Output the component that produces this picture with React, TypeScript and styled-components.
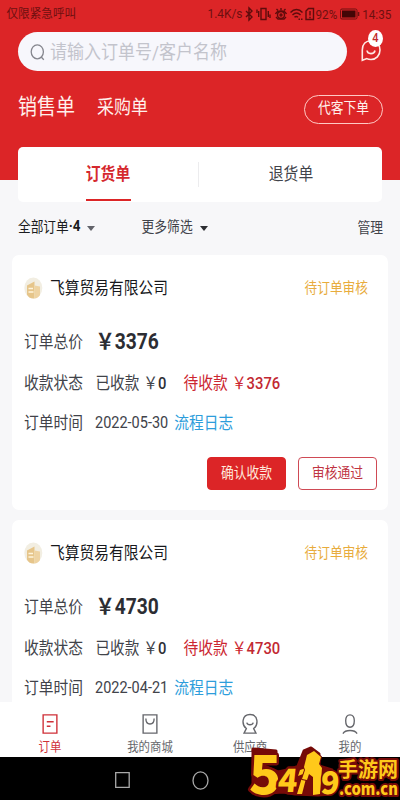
import React from "react";
import styled, { createGlobalStyle } from "styled-components";

const RED = "#dc2527";

const GlobalStyle = createGlobalStyle`
  * { box-sizing: border-box; }
  body { margin: 0; background: #f7f7f9; }
`;

const Screen = styled.div`
  width: 400px;
  height: 800px;
  position: relative;
  overflow: hidden;
  display: flex;
  flex-direction: column;
  background: #f7f7f9;
  font-family: Roboto, "Noto Sans CJK SC", sans-serif;
`;

const Txt = styled.span<{ $size: number; $color?: string; $weight?: number; $stretch?: number }>`
  display: inline-block;
  flex: none;
  white-space: nowrap;
  line-height: 20px;
  font-size: ${(p) => p.$size}px;
  color: ${(p) => p.$color ?? "#41434a"};
  font-weight: ${(p) => p.$weight ?? 400};
  transform: scaleY(${(p) => p.$stretch ?? 1.13});
`;

const Header = styled.header`
  flex: none;
  height: 180px;
  background: ${RED};
  display: flex;
  flex-direction: column;
`;

const StatusBar = styled.div`
  height: 32px;
  padding: 0 8px 4px 6.5px;
  display: flex;
  align-items: center;
  justify-content: space-between;
`;

const StatusIcons = styled.div`
  display: flex;
  align-items: center;
  width: 184px;
  height: 20px;
  margin-right: 0.5px;
  svg { flex: none; }
`;

const SearchRow = styled.div`
  height: 39px;
  padding-left: 18px;
  display: flex;
  align-items: center;
`;

const SearchBox = styled.div`
  width: 329px;
  height: 39px;
  border-radius: 20px;
  background: #f7f7fc;
  display: flex;
  align-items: center;
  padding-left: 12px;
  gap: 4px;
`;

const ChatButton = styled.div`
  position: relative;
  margin-left: 13px;
  margin-top: -3px;
  width: 24px;
  height: 24px;
`;

const Badge = styled.span`
  position: absolute;
  left: 8px;
  top: -8px;
  width: 15px;
  height: 17px;
  border-radius: 50%;
  background: #fff;
  display: flex;
  align-items: center;
  justify-content: center;
`;

const KindRow = styled.div`
  height: 76px;
  padding: 0 17px 5px 18px;
  display: flex;
  align-items: center;
  gap: 22px;
`;

const PillButton = styled.div`
  margin-left: auto;
  margin-top: 6px;
  width: 79px;
  height: 29px;
  border: 1px solid #ffc9c4;
  border-radius: 15px;
  display: flex;
  align-items: center;
  justify-content: center;
  padding-bottom: 3px;
`;

const TabCard = styled.div`
  flex: none;
  margin: -33px 18px 0;
  height: 55px;
  border-radius: 5px;
  background: #fff;
  display: flex;
`;

const Tab = styled.div<{ $active?: boolean }>`
  width: 180px;
  display: flex;
  flex-direction: column;
  align-items: center;
  padding-top: 17px;
  & ~ & { flex: 1; padding-left: 1px; }
  &::after {
    content: "";
    width: 45px;
    height: 2px;
    margin-top: 15px;
    background: ${(p) => (p.$active ? RED : "transparent")};
  }
`;

const TabDivider = styled.div`
  width: 1px;
  height: 25px;
  margin-top: 15px;
  background: #ececee;
`;

const FilterRow = styled.div`
  flex: none;
  height: 53px;
  padding: 0 17px 3px 18px;
  display: flex;
  align-items: center;
`;

const Caret = styled.i<{ $color: string; $gap: number }>`
  margin-left: ${(p) => p.$gap}px;
  margin-top: 2px;
  border: 4.5px solid transparent;
  border-top: 5px solid ${(p) => p.$color};
  border-bottom: 0;
`;

const MoreFilter = styled.div`
  display: flex;
  align-items: center;
  margin-left: 46px;
`;

const Manage = styled.div`
  margin-left: auto;
`;

const OrderCard = styled.section`
  flex: none;
  margin: 0 12px 10px;
  height: 255px;
  border-radius: 7px;
  background: #fff;
  padding: 23px 11px 0 12px;
`;

const CardHead = styled.div`
  display: flex;
  align-items: center;
  height: 20px;
  padding-right: 9px;
  svg { margin-right: 7px; }
  > :last-child { margin-left: auto; margin-top: -1px; }
`;

const Field = styled.div<{ $top: number }>`
  display: flex;
  align-items: center;
  height: 20px;
  margin-top: ${(p) => p.$top}px;
`;

const Value = styled.div<{ $gap: number }>`
  display: flex;
  align-items: center;
  margin-left: ${(p) => p.$gap}px;
`;

const Actions = styled.div`
  display: flex;
  justify-content: flex-end;
  gap: 12px;
  margin-top: 24px;
`;

const ActionButton = styled.div<{ $solid?: boolean }>`
  width: 79px;
  height: 33px;
  border: 1px solid ${(p) => (p.$solid ? RED : "#cf4a55")};
  border-radius: 4px;
  background: ${(p) => (p.$solid ? RED : "#fff")};
  display: flex;
  align-items: center;
  justify-content: center;
  padding-bottom: 1px;
`;

const BottomArea = styled.footer`
  position: absolute;
  left: 0;
  right: 0;
  bottom: 0;
`;

const NavBar = styled.nav`
  height: 55px;
  background: #fff;
  display: flex;
`;

const NavItem = styled.div`
  flex: 1;
  display: flex;
  flex-direction: column;
  align-items: center;
  padding-top: 11px;
  gap: 2px;
`;

const SystemBar = styled.div`
  height: 43px;
  background: #000;
  display: flex;
  align-items: center;
  padding: 3px 0 0 114px;
  gap: 61px;
`;

const Watermark = styled.svg`
  position: absolute;
  right: 0;
  bottom: 0;
`;

const StatusGlyphs = () => (
  <svg width="72" height="16" viewBox="0 0 72 16" fill="none" stroke="#5e0c0c" strokeWidth="1.4">
    <path d="M2 5l6 6-3 3V2l3 3-6 6" />
    <path d="M17 2.500h5v11h-5zM14.700 5v6M24.300 5v6M13 3.500v3.500M26 8.500v3.500" />
    <circle cx="37" cy="9" r="3.500" />
    <circle cx="37" cy="9" r="1" />
    <path d="M31.500 8c2-4 9-4 11 0M32.500 3l1.500 1.500M41.500 3L40 4.500M37 2v2M32 11l2 2h6l2-2" />
    <path d="M46.500 6.500c3.500-4 8.500-4 12 0M48.500 9c2.500-2.500 5.500-2.500 8 0M50.500 11.300c1-1 2.500-1 3.500 0" />
    <path d="M54.500 13.200h5" strokeDasharray="1.500 1" />
    <path d="M62 5l2.500-2.500h5v11H62zM66 5v4.500M66 10.800v1.400" />
  </svg>
);

const BatteryIcon = () => (
  <svg width="20" height="12" viewBox="0 0 20 12">
    <rect x="0.500" y="1" width="16.500" height="10" rx="1.500" fill="none" stroke="#6e1010" />
    <rect x="2" y="2.500" width="13.500" height="7" fill="#430606" />
    <rect x="17.800" y="4" width="1.500" height="4" fill="#6e1010" />
  </svg>
);

const SearchIcon = () => (
  <svg width="16" height="20" viewBox="0 0 16 20" fill="none" stroke="#85868e" strokeWidth="1.300">
    <ellipse cx="7.300" cy="9.800" rx="6.100" ry="7" />
    <path d="M11.200 15l2.600 2.700" />
  </svg>
);

const ChatIcon = () => (
  <svg width="24" height="24" viewBox="0 0 24 24" fill="none" stroke="#ffe9e4" strokeWidth="1.600">
    <path d="M2.300 22.300V12C2.300 6 6 2.700 11 2.700c5.500 0 9 4 9 9.400 0 5.500-4 9.400-9 9.400-1.800 0-3-.2-4.200-.9z" />
    <path d="M7 12.500c.6 4.200 7.200 4.200 8 0" />
  </svg>
);

const CompanyIcon = () => (
  <svg width="19" height="22" viewBox="0 0 19 22">
    <ellipse cx="9.300" cy="11" rx="9" ry="10.600" fill="#f2eee2" />
    <path d="M3 8.500l7.500-4v17c-4 .3-6.500-1.500-7.500-4z" fill="#e6c58a" />
    <path d="M10.500 8.500l5.500 1v8.500c-1.500 2.500-3 3.300-5.500 3.500z" fill="#eed3a2" />
    <path d="M4.500 11.500h4.500M4.500 15h5" stroke="#fff5dd" strokeWidth="1.500" />
  </svg>
);

const navIcons = [
  <path key="o" d="M3.500 2h15v20h-15zM7.500 9.500h7.500M7.500 14.500h4" />,
  <path key="m" d="M3.500 2h15v20h-15zM6.500 6c0 8 9 8 9 0" />,
  <path key="s" d="M7 17C1.500 12.500 2 1.700 11 1.700s9.500 10.800 4 15.300l2.500 5h-13zM7.500 10.500c.8 3 6.200 3 7 0" />,
  <path key="p" d="M11 2c3.200 0 4.700 2.200 4.700 6.500s-1.700 7-4.700 7-4.700-2.700-4.700-7S7.800 2 11 2zM3.300 22.500c2.500-4.500 12.900-4.500 15.400 0" />,
];

const navLabels = ["订单", "我的商城", "供应商", "我的"];

const orders = [
  { total: "3376", date: "2022-05-30" },
  { total: "4730", date: "2022-04-21" },
];

const Order = ({ total, date }: { total: string; date: string }) => (
  <OrderCard>
    <CardHead>
      <CompanyIcon />
      <Txt $size={14.75} $color="#17181c">飞算贸易有限公司</Txt>
      <Txt $size={12.7} $color="#e8ac3c">待订单审核</Txt>
    </CardHead>
    <Field $top={34}>
      <Txt $size={14.75}>订单总价</Txt>
      <Value $gap={12.5}>
        <Txt $size={19.2} $weight={700} $color="#2c2d33">￥{total}</Txt>
      </Value>
    </Field>
    <Field $top={21}>
      <Txt $size={14.75}>收款状态</Txt>
      <Value $gap={12.5}>
        <Txt $size={14.6}>已收款</Txt>
      </Value>
      <Value $gap={4}>
        <Txt $size={14.8}>￥</Txt>
        <Txt $size={14.8} $weight={500} $color="#2f3036">0</Txt>
      </Value>
      <Value $gap={17}>
        <Txt $size={14.75} $color="#cc2630">待收款</Txt>
      </Value>
      <Value $gap={4}>
        <Txt $size={14.8} $color="#cc2630">￥</Txt>
        <Txt $size={14.8} $weight={500} $color="#c22832">{total}</Txt>
      </Value>
    </Field>
    <Field $top={20}>
      <Txt $size={14.75}>订单时间</Txt>
      <Value $gap={12}>
        <Txt $size={14.5}>{date}</Txt>
      </Value>
      <Value $gap={6}>
        <Txt $size={14.75} $color="#2d9ddb">流程日志</Txt>
      </Value>
    </Field>
    <Actions>
      <ActionButton $solid>
        <Txt $size={12.8} $color="#ffe9dc">确认收款</Txt>
      </ActionButton>
      <ActionButton>
        <Txt $size={12.8} $color="#c03442">审核通过</Txt>
      </ActionButton>
    </Actions>
  </OrderCard>
);

const SiteLogo = () => (
  <Watermark
    width="154"
    height="60"
    viewBox="0 -4 154 60"
    fill="#ffc91a"
    stroke="#760b08"
    strokeWidth="5"
    strokeLinejoin="round"
    paintOrder="stroke"
    fontFamily='"Noto Sans CJK SC", sans-serif'
    fontWeight="900"
  >
    <path
      fill="#760b08"
      strokeWidth="3"
      d="M7 5l23 2v7H18v8l14 6 14-3 6-3 4-10 2-5 7-3 8 6v12l13 4v24l-14 1-23-1-12-2-14 1H7z"
    />
    <text fontSize="54" transform="translate(3 49.500) scale(.98 1)">5</text>
    <text fontSize="32" transform="translate(31 48) skewX(-6)">4</text>
    <path strokeWidth="2" d="M51 50l6-20-5 2 2-6 9-3-7 27z" />
    <path strokeWidth="2" d="M58 23l3-12 7-4 7 6-2 7 3 4-2 26-7 1V33l-4-3-2 6-5-1 3-9z" />
    <text fontSize="31" strokeWidth="3" transform="translate(74 50) skewX(-4)">9</text>
    <text x="92" y="33" fontSize="20" strokeWidth="4" fontWeight="700">手游网</text>
    <text x="93" y="51" fontSize="17" strokeWidth="4" textLength="59" lengthAdjust="spacingAndGlyphs">.com.cn</text>
  </Watermark>
);

export default function App() {
  return (
    <Screen>
      <GlobalStyle />
      <Header>
        <StatusBar>
          <Txt $size={11.6} $color="#6e1010" $stretch={1.06}>仅限紧急呼叫</Txt>
          <StatusIcons>
            <Txt $size={11.9} $color="#6e1010" $stretch={1.12}>1.4K/s</Txt>
            <Value $gap={1}><StatusGlyphs /></Value>
            <Txt $size={11.7} $color="#6e1010" $stretch={1.14}>92%</Txt>
            <Value $gap={3}><BatteryIcon /></Value>
            <Value $gap={2}><Txt $size={11.7} $color="#6e1010" $stretch={1.14}>14:35</Txt></Value>
          </StatusIcons>
        </StatusBar>
        <SearchRow>
          <SearchBox>
            <SearchIcon />
            <Txt $size={17} $color="#c3c4cc">请输入订单号/客户名称</Txt>
          </SearchBox>
          <ChatButton>
            <ChatIcon />
            <Badge><Txt $size={11} $color="#c22a2a" $weight={500}>4</Txt></Badge>
          </ChatButton>
        </SearchRow>
        <KindRow>
          <Txt $size={19} $color="#fff0ec">销售单</Txt>
          <Txt $size={17} $color="#fff0ec">采购单</Txt>
          <PillButton><Txt $size={12.8} $color="#fff0ec">代客下单</Txt></PillButton>
        </KindRow>
      </Header>
      <TabCard>
        <Tab $active><Txt $size={14.8} $weight={700} $color="#d5282e">订货单</Txt></Tab>
        <TabDivider />
        <Tab><Txt $size={14.8}>退货单</Txt></Tab>
      </TabCard>
      <FilterRow>
        <Txt $size={12.7} $color="#1b1c20">全部订单</Txt>
        <Txt $size={13.4} $color="#1b1c20" $weight={700} $stretch={1.1}>·4</Txt>
        <Caret $color="#62636a" $gap={7} />
        <MoreFilter>
          <Txt $size={12.8}>更多筛选</Txt>
          <Caret $color="#2d2e33" $gap={7} />
        </MoreFilter>
        <Manage><Txt $size={12.8}>管理</Txt></Manage>
      </FilterRow>
      {orders.map((o) => (
        <Order key={o.date} {...o} />
      ))}
      <BottomArea>
        <NavBar>
          {navLabels.map((label, i) => (
            <NavItem key={label}>
              <svg width="22" height="24" viewBox="0 0 22 24" fill="none" stroke={i ? "#66676c" : "#cf3038"} strokeWidth="1.500">
                {navIcons[i]}
              </svg>
              <Txt $size={11.4} $color={i ? "#66676c" : "#cf3038"} $stretch={1.1}>{label}</Txt>
            </NavItem>
          ))}
        </NavBar>
        <SystemBar>
          <svg width="17" height="18" viewBox="0 0 17 18" fill="none" stroke="#a9a9a9" strokeWidth="1.300">
            <path d="M1.700 1.700h13.500v14.600H1.700z" />
          </svg>
          <svg width="17" height="19" viewBox="0 0 17 19" fill="none" stroke="#a9a9a9" strokeWidth="1.300">
            <ellipse cx="8.500" cy="9.500" rx="7.500" ry="8.700" />
          </svg>
        </SystemBar>
        <SiteLogo />
      </BottomArea>
    </Screen>
  );
}
